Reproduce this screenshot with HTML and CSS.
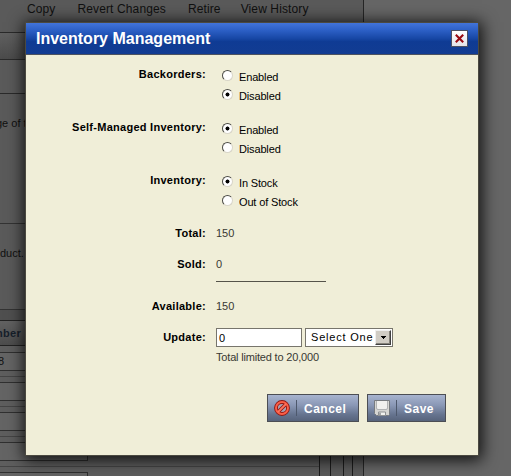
FILE: index.html
```html
<!DOCTYPE html>
<html lang="en">
<head>
<meta charset="utf-8">
<title>Inventory Management</title>
<link rel="stylesheet" href="styles.css">
</head>
<body>
<div class="page">
  <nav class="menu"><a>Copy</a><a>Revert Changes</a><a>Retire</a><a>View History</a></nav>
  <div class="bar"></div>
  <div class="subbar"></div>
  <div class="panel first">ge of t</div>
  <div class="panel second">duct.</div>
  <div class="spacer"></div>
  <div class="thead">nber</div>
  <div class="trow"><span class="cell">8</span></div>
  <div class="trow"><span class="cell"></span></div>
  <div class="trow"><span class="cell"></span></div>
  <div class="trow"><span class="cell"></span></div>
  <div class="trow"><span class="cell"></span></div>
  <div class="columns"><i></i><i></i><i></i><i></i></div>
</div>

<section class="dialog">
  <header class="title">
    <h1>Inventory Management</h1>
    <button class="close" aria-label="Close"><svg width="9" height="9" viewBox="0 0 9 9"><path d="M.8.8l7.4 7.4M8.2.8L.8 8.2" stroke="#980a12" stroke-width="2.1"/></svg></button>
  </header>
  <form class="form">
    <div class="row group"><span class="label">Backorders:</span>
      <div class="options"><label><i class="radio"></i><span>Enabled</span></label><label><i class="radio on"></i><span>Disabled</span></label></div></div>
    <div class="row group"><span class="label">Self-Managed Inventory:</span>
      <div class="options"><label><i class="radio on"></i><span>Enabled</span></label><label><i class="radio"></i><span>Disabled</span></label></div></div>
    <div class="row group"><span class="label">Inventory:</span>
      <div class="options"><label><i class="radio on"></i><span>In Stock</span></label><label><i class="radio"></i><span>Out of Stock</span></label></div></div>
    <div class="row total"><span class="label">Total:</span><span class="value">150</span></div>
    <div class="row sold"><span class="label">Sold:</span><span class="value">0</span></div>
    <div class="row avail"><span class="label">Available:</span><span class="value">150</span></div>
    <div class="row update"><span class="label">Update:</span>
      <div>
        <div class="fields"><span class="input">0</span><span class="select"><span>Select One</span><i class="arrow"><svg width="5" height="3" viewBox="0 0 5 3" shape-rendering="crispEdges"><path d="M0 0h5v1H4v1H3v1H2V2H1V1H0z"/></svg></i></span></div>
        <p class="hint">Total limited to 20,000</p>
      </div>
    </div>
    <div class="actions">
      <button type="button" class="btn cancel"><svg width="16" height="16" viewBox="0 0 16 16"><circle cx="8" cy="8" r="6" fill="#a9a3b4" stroke="#8d1712" stroke-width="3.8"/><path d="M4.2 11.8l7.6-7.6" stroke="#8d1712" stroke-width="3.6"/><circle cx="8" cy="8" r="6" fill="none" stroke="#fb5f48" stroke-width="2"/><path d="M4 12l8-8" stroke="#ff735c" stroke-width="1.8"/></svg><i class="sep"></i><span>Cancel</span></button>
      <button type="button" class="btn save"><svg width="16" height="16" viewBox="0 0 16 16"><path d="M.5.5h15v14l-1 1h-12l-2-2z" fill="#d6d6d3" stroke="#777b80"/><path d="M3 1h10v8H3z" fill="#f0f0ee"/><path d="M2.5 1v7q0 1.5 1.5 1.5h8q1.500 0 1.500-1.500V1" fill="none" stroke="#b0b2b3"/><path d="M4.500 12h7v3.500h-7z" fill="#f2f2ef" stroke="#8e9193"/><path d="M5 12.500h2V15H5z" fill="#a5a7a8"/></svg><i class="sep"></i><span>Save</span></button>
    </div>
  </form>
</section>
</body>
</html>
```

FILE: styles.css
```css
* { box-sizing: border-box; }
body {
  margin: 0;
  width: 511px;
  height: 476px;
  overflow: hidden;
  position: relative;
  background: #666;
  font: 11px/13px "Liberation Sans", Arial, sans-serif;
  color: #000;
}

/* dimmed page underneath */
.page {
  position: relative;
  width: 364px;
  height: 476px;
  overflow: hidden;
  border-right: 1px solid #262626;
  background: #5a5a5a;
  color: #101010;
}
.menu {
  display: flex;
  gap: 22px;
  height: 33px;
  padding: 2px 0 0 27px;
  border-bottom: 1px solid #2a2a2a;
  font-size: 12px;
  line-height: 14px;
  letter-spacing: .12px;
  white-space: nowrap;
}
.menu a:nth-child(4) { margin-left: -2px; }
.bar {
  height: 27px;
  border-bottom: 1px solid #2a2a2a;
  background: linear-gradient(#606060, #4b4b4b);
}
.subbar { height: 34px; border-bottom: 1px solid #2a2a2a; }
.panel { border-bottom: 1px solid #333; }
.first { height: 130px; padding-top: 23px; text-indent: -4px; }
.second { height: 86px; padding-top: 23px; }
.spacer { height: 10px; background: #4f4f4f; }
.thead {
  height: 26px;
  padding-top: 6px;
  border: solid #222;
  border-width: 1px 0;
  background: linear-gradient(#626262, #4c4c4c);
  color: #16202b;
  font-weight: bold;
  letter-spacing: .3px;
  text-indent: -4px;
}
.trow {
  height: 31px;
  padding-top: 6px;
  background: #5e5e5e;
  border-bottom: 1px solid #454545;
}
.trow + .trow { height: 30px; padding-top: 5px; }
.cell {
  display: block;
  width: 88px;
  height: 19px;
  padding-top: 2px;
  border: solid #303030;
  border-width: 1px 1px 1px 0;
  background: #646464;
  text-indent: -2px;
}
.columns {
  position: absolute;
  top: 346px;
  bottom: 0;
  left: 319px;
  width: 45px;
  display: grid;
  grid-template-columns: 11px 13px 9px 12px;
  background: #5a5a5a;
}
.columns i { border-left: 1px solid #1c1c1c; }

/* dialog */
.dialog {
  position: absolute;
  left: 25px;
  top: 22px;
  width: 454px;
  height: 434px;
  border: 1px solid #4b4940;
  background: #f0eed8;
  box-shadow: 1px 2px 15px 2px rgba(0, 0, 0, .85);
}
.title {
  display: flex;
  align-items: center;
  justify-content: space-between;
  height: 32px;
  padding: 0 10px;
  border-bottom: 1px solid #4d5360;
  background: linear-gradient(#4274da 0, #2b5ec4 25%, #1747a5 50%, #0f3b94 60%, #123c92 100%);
}
h1 {
  margin: 0;
  font-size: 16px;
  line-height: 18px;
  color: #fff;
}
.close {
  display: flex;
  align-items: center;
  justify-content: center;
  width: 17px;
  height: 17px;
  padding: 0;
  border: 1px solid #4b5063;
  background: linear-gradient(#fff, #e3e3e8);
}
.close svg { flex: none; }
.row {
  display: grid;
  grid-template-columns: 180px 1fr;
  column-gap: 10px;
}
.form { padding-top: 13px; }
.group { height: 53px; }
.label {
  text-align: right;
  font-weight: bold;
  letter-spacing: .27px;
  white-space: nowrap;
}
.options label {
  display: flex;
  height: 19px;
  padding-left: 6px;
  gap: 6px;
}
.options span { padding-top: 3px; letter-spacing: -.15px; }
.options label + label span { padding-top: 3px; }
.radio {
  width: 11px;
  height: 11px;
  margin-top: 2px;
  border: 1px solid;
  border-color: #4b4b46 #d8d5c8 #d8d5c8 #4b4b46;
  border-radius: 50%;
  background: #fff;
}
.on { background: radial-gradient(circle, #000 0 1.7px, #fff 2.3px); }
.value, .hint { color: #383833; }
.total { height: 31px; }
.sold { height: 42px; }
.sold .value {
  width: 110px;
  height: 24px;
  border-bottom: 1px solid #55534a;
}
.avail { height: 31px; }
.update { height: 63px; }
.fields {
  display: flex;
  align-items: center;
  gap: 3px;
  margin-top: -4px;
  height: 20px;
  color: #000;
}
.input, .select { border: 1px solid #77756c; background: #fff; }
.input {
  width: 86px;
  height: 19px;
  margin-top: 1px;
  padding: 3px 2px;
}
.select {
  display: flex;
  align-items: center;
  justify-content: space-between;
  width: 88px;
  height: 19px;
  padding: 1px 1px 0 5px;
  letter-spacing: .8px;
  white-space: nowrap;
}
.arrow {
  display: flex;
  align-items: center;
  justify-content: center;
  width: 16px;
  height: 15px;
  border: 1px solid;
  border-color: #eee #404040 #404040 #eee;
  box-shadow: inset -1px -1px #85827a;
  background: #d0ccc4;
}
.hint { margin: 4px 0 0; letter-spacing: -.18px; }
.actions { display: flex; gap: 8px; padding-left: 241px; }
.btn {
  display: flex;
  align-items: center;
  height: 28px;
  padding: 0 0 0 6px;
  border: 1px solid #4c4e54;
  background: linear-gradient(#a8b4cf 0, #8997b5 40%, #66748f 75%, #56637b 100%);
  color: #fff;
  font: bold 12px/14px "Liberation Sans", Arial, sans-serif;
  letter-spacing: .5px;
}
.cancel { width: 92px; }
.save { width: 79px; }
.sep { width: 1px; height: 16px; margin: 0 7px 0 6px; background: #4d586c; }
.btn span { padding-top: 2px; }
```
